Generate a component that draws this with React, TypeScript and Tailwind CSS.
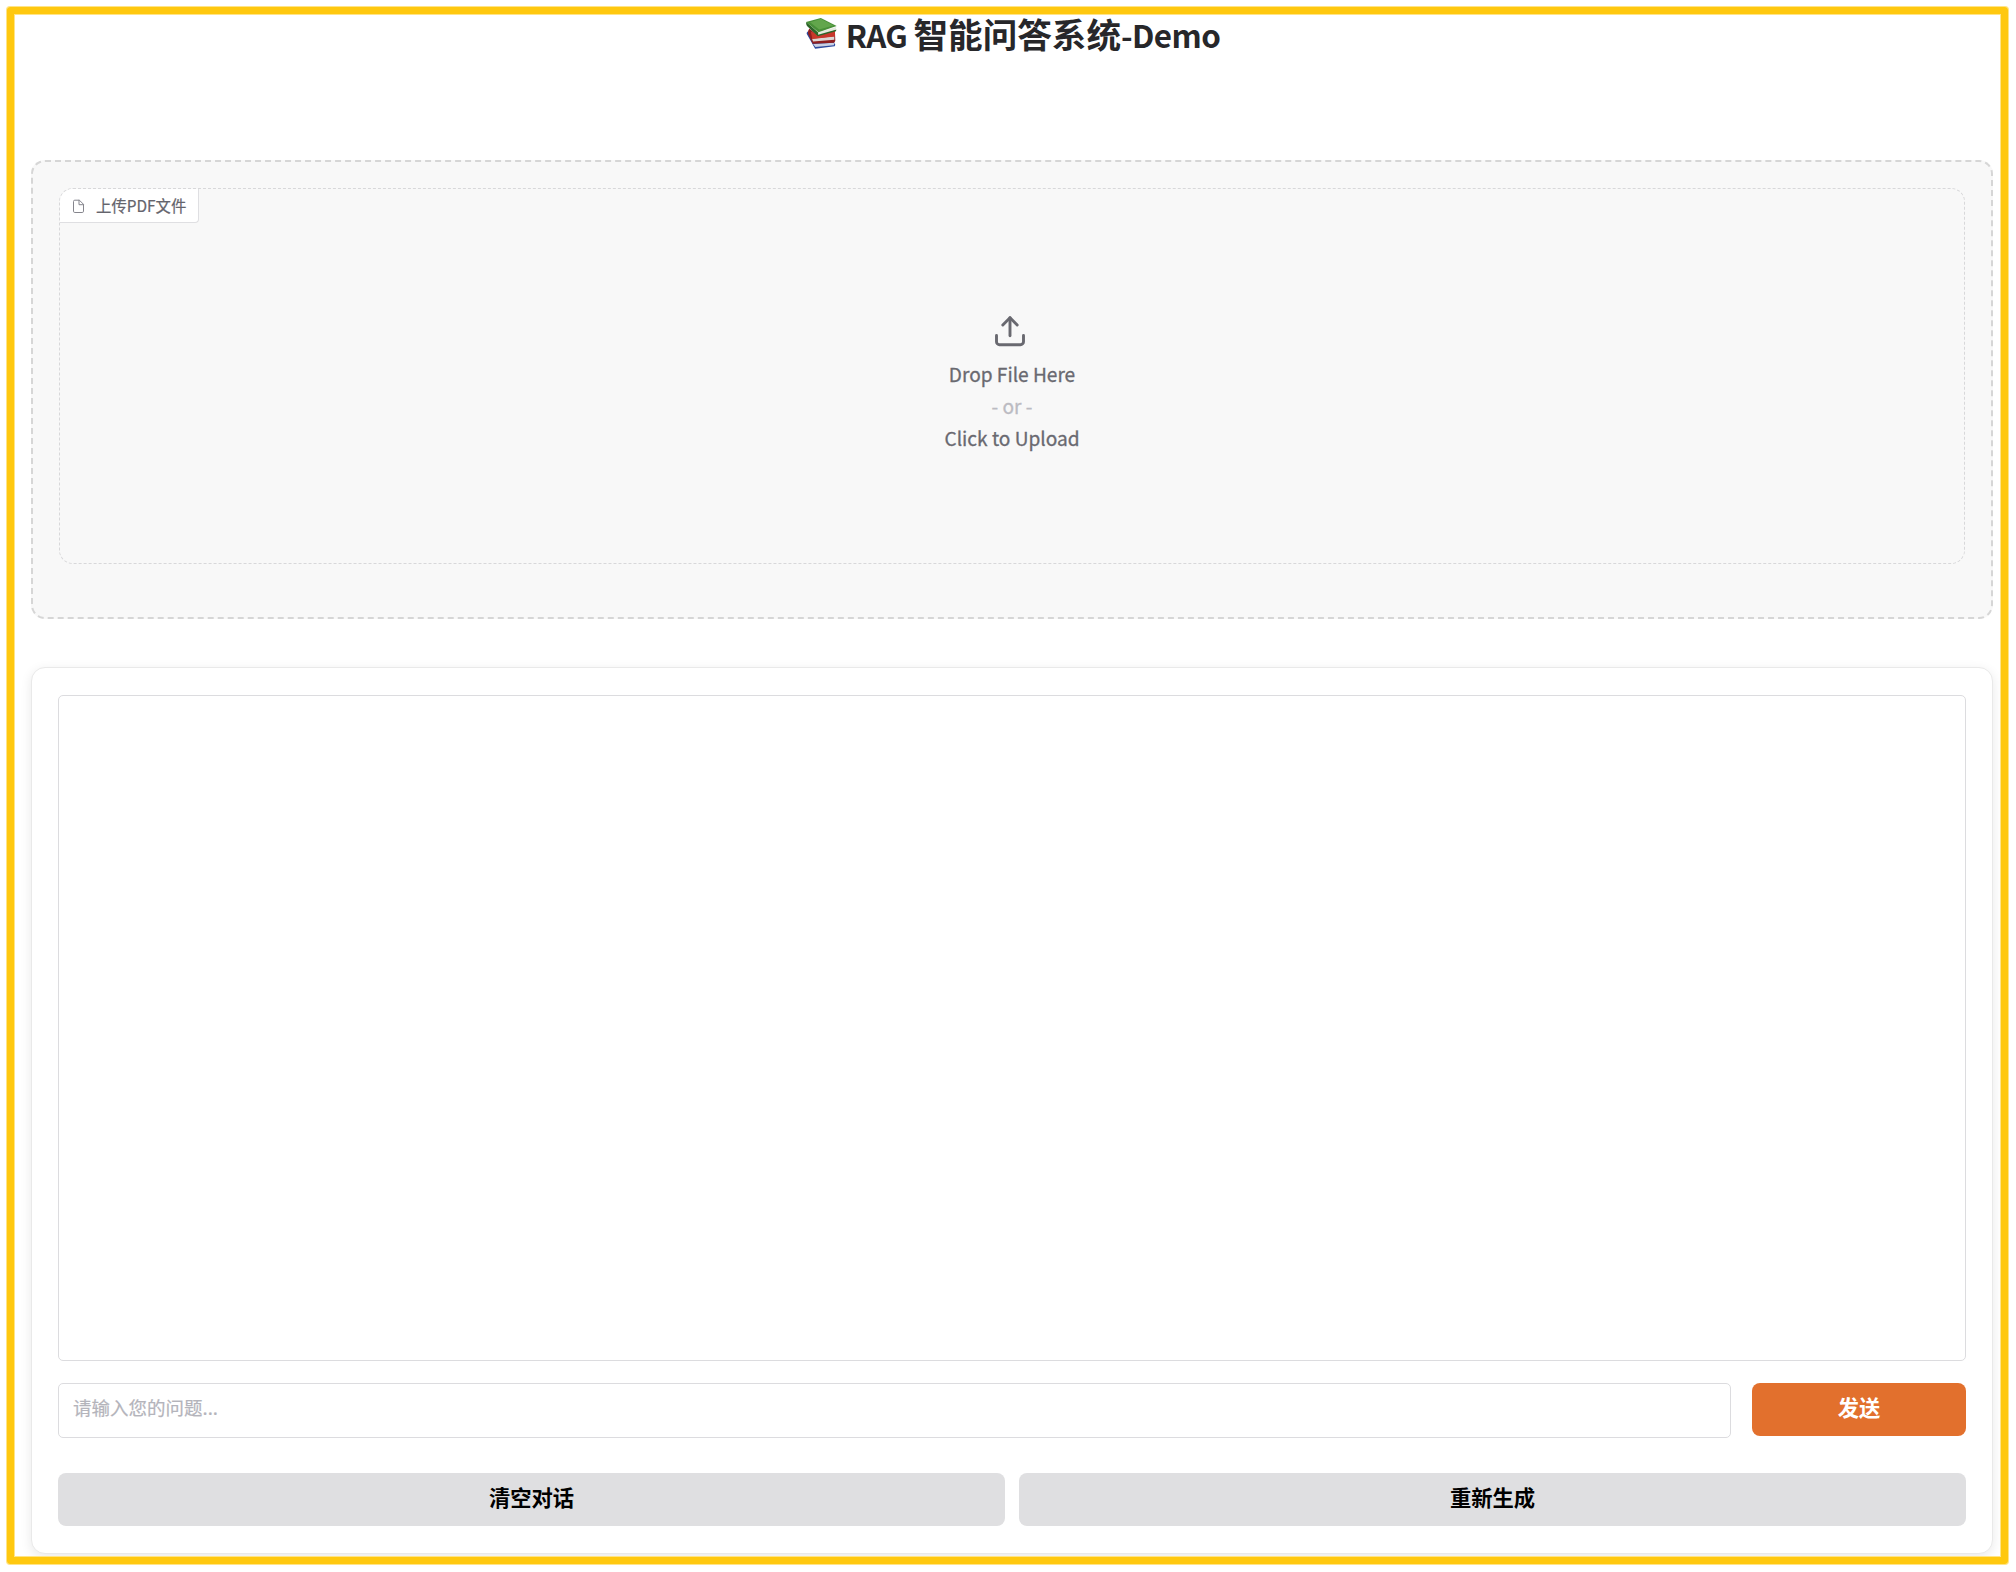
import React from "react";

function BooksIcon() {
  return (
    <svg className="h-[31px] w-[31px] shrink-0" viewBox="78 55 92 94" preserveAspectRatio="none">
      <path d="M84 95 Q79 98 80 103 L105 148 L163 141 L165 136 L160 128 L99 131 Z" fill="#2c4a9e" />
      <path d="M99 134 L161 130 L161 138 L106 143 Z" fill="#c9d1e4" />
      <path d="M88 87 Q83 93 84 103 L98 133 L162 130 L165 124 L164 98 L112 108 Z" fill="#8f1f20" />
      <path d="M96 118 L162 110 L162 121 L99 126 Z" fill="#ddd6d3" />
      <path d="M92 96 L114 104 L164 92 L164 111 L97 119 Z" fill="#c8372b" />
      <path d="M79 67 Q77 73 81 79 L113 110 L167 95 L168 90 L115 100 Z" fill="#2c6527" />
      <path d="M114 98 L168 82 L166 91 L114 106 Z" fill="#e4e9dc" />
      <path d="M78 67 L122 55 L169 79 L115 98 Z" fill="#489038" />
      <path d="M90 68 L122 58 L160 78 L117 90 Z" fill="#62a64c" />
    </svg>
  );
}

function FileIcon() {
  return (
    <svg
      className="mt-px h-[15px] w-[13px]"
      viewBox="0 0 13 15"
      fill="none"
      stroke="#85858d"
      strokeWidth="1"
      strokeLinecap="round"
      strokeLinejoin="round"
    >
      <path d="M7 1.2H2.8A1.3 1.3 0 0 0 1.5 2.5v9.7a1.3 1.3 0 0 0 1.3 1.3h7.4a1.3 1.3 0 0 0 1.3-1.3V5.7z" />
      <path d="M7 1.2v4.5h4.5" />
    </svg>
  );
}

function UploadIcon() {
  return (
    <svg
      className="h-[32px] w-[32px]"
      viewBox="0 0 32 32"
      fill="none"
      stroke="#696970"
      strokeWidth="2.9"
      strokeLinecap="round"
      strokeLinejoin="round"
    >
      <path d="M2.5 20.5v6.2a3 3 0 0 0 3 3h21a3 3 0 0 0 3-3v-6.2" />
      <path d="M8.8 10 16 2.8 23.2 10" />
      <path d="M16 2.8v18" />
    </svg>
  );
}

export default function App() {
  return (
    <div className="relative h-[1572px] w-[2016px] overflow-hidden bg-white pl-[31px] pr-[23px] pt-[7px] font-['Noto_Sans_CJK_SC',sans-serif]">
      <header className="flex h-[153px] items-start justify-center pl-[2px]">
        <div className="flex items-start">
          <div className="pt-[11px]">
            <BooksIcon />
          </div>
          <h1 className="ml-[9px] whitespace-nowrap text-[34.6px] font-bold leading-[52px] text-[#27272a]">
            <span className="text-[31.4px] tracking-[-0.7px]">RAG </span>
            <span>智能问答系统</span>
            <span className="text-[31.4px] tracking-[-0.6px]">-Demo</span>
          </h1>
        </div>
      </header>

      <section className="h-[459px] rounded-[14px] border-2 border-dashed border-[#d6d6d6] bg-[#f8f8f8] p-[26px]">
        <div className="flex h-[376px] flex-col overflow-hidden rounded-[14px] border border-dashed border-[#d8d8da]">
          <div className="flex h-[34px] w-[139px] shrink-0 items-center rounded-br-[4px] border-b border-r border-[#dfdfe2] bg-white pl-[12px]">
            <FileIcon />
            <span className="ml-[11px] whitespace-nowrap text-[15.4px] leading-[31px] text-[#64646c] [-webkit-text-stroke:0.2px]">
              上传PDF文件
            </span>
          </div>
          <div className="flex flex-1 flex-col items-center pt-[92px] text-[19.1px] leading-[32px] text-[#696970] [-webkit-text-stroke:0.3px]">
            <div className="mr-[4px]">
              <UploadIcon />
            </div>
            <div className="mt-[11px]">Drop File Here</div>
            <div className="text-[#bbbbc2]">- or -</div>
            <div>Click to Upload</div>
          </div>
        </div>
      </section>

      <section className="mt-[48px] h-[887px] rounded-[14px] border border-[#e9e9e9] bg-white px-[26px] pt-[27px] shadow-[0_3px_12px_rgba(0,0,0,0.09)]">
        <div className="h-[666px] rounded-[5px] border border-[#dcdcdf]" />
        <div className="mt-[22px] flex items-start gap-[21px]">
          <input
            className="h-[55px] min-w-0 flex-1 rounded-[5px] border border-[#dcdcdf] bg-white px-[14px] pb-[7px] text-[18.5px] outline-none [-webkit-text-stroke:0.2px] placeholder:text-[#b4b4bb]"
            placeholder="请输入您的问题..."
          />
          <button className="h-[53px] w-[214px] rounded-[8px] bg-[#e2702d] pb-[6px] text-[21.3px] font-bold text-white">
            发送
          </button>
        </div>
        <div className="mt-[35px] grid grid-cols-2 gap-[14px]">
          <button className="h-[53px] rounded-[8px] bg-[#dfdfe1] pb-[6px] text-[21.3px] font-bold text-black">清空对话</button>
          <button className="h-[53px] rounded-[8px] bg-[#dfdfe1] pb-[6px] text-[21.3px] font-bold text-black">重新生成</button>
        </div>
      </section>

      <div className="pointer-events-none absolute bottom-[8px] left-[7px] right-[8px] top-[7px] rounded-[3px] border-[7px] border-[#ffc80f] shadow-[0_0_0_1px_#ffe487,inset_0_0_0_1px_#ffe487]" />
    </div>
  );
}
